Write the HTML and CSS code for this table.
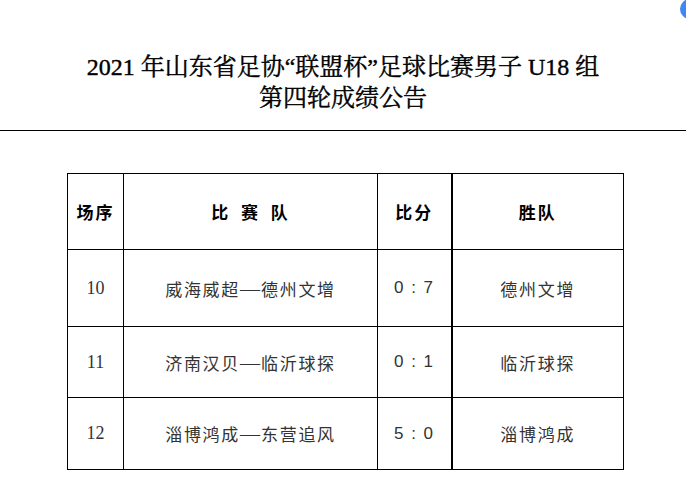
FILE: index.html
```html
<!DOCTYPE html>
<html lang="zh-CN">
<head>
<meta charset="utf-8">
<title>第四轮成绩公告</title>
<link rel="stylesheet" href="styles.css">
</head>
<body>
<span class="dot"></span>
<header class="head">
  <h1 class="title">2021 年山东省足协“联盟杯”足球比赛男子 U18 组<br>第四轮成绩公告</h1>
</header>
<main class="content">
  <table class="results">
    <colgroup>
      <col class="c-no"><col class="c-team"><col class="c-score"><col class="c-win">
    </colgroup>
    <thead>
      <tr>
        <th>场序</th>
        <th class="spread">比 赛 队</th>
        <th>比分</th>
        <th>胜队</th>
      </tr>
    </thead>
    <tbody>
      <tr>
        <td class="num">10</td>
        <td class="team">威海威超<span class="dash">—</span>德州文增</td>
        <td class="score">0 : 7</td>
        <td class="team">德州文增</td>
      </tr>
      <tr>
        <td class="num">11</td>
        <td class="team">济南汉贝<span class="dash">—</span>临沂球探</td>
        <td class="score">0 : 1</td>
        <td class="team">临沂球探</td>
      </tr>
      <tr>
        <td class="num">12</td>
        <td class="team">淄博鸿成<span class="dash">—</span>东营追风</td>
        <td class="score">5 : 0</td>
        <td class="team">淄博鸿成</td>
      </tr>
    </tbody>
  </table>
</main>
</body>
</html>
```
FILE: styles.css
```css
html, body {
  margin: 0;
  padding: 0;
  background: #fff;
  overflow: hidden;
}
body {
  width: 686px;
  height: 482px;
  position: relative;
  font-family: "Noto Sans CJK SC", sans-serif;
}
.dot {
  position: absolute;
  left: 680px;
  top: -1px;
  width: 20px;
  height: 20px;
  border-radius: 50%;
  background: #4286f5;
}
.head {
  padding: 52px 0 16px;
  border-bottom: 1px solid #000;
}
.title {
  margin: 0;
  text-align: center;
  font-family: "Liberation Serif", "Noto Serif CJK SC", "Noto Sans CJK SC", serif;
  font-size: 24px;
  line-height: 31px;
  font-weight: normal;
  -webkit-text-stroke: 0.4px #000;
  color: #000;
}
.content {
  padding: 42px 0 0 67px;
}
.results {
  border-collapse: collapse;
  table-layout: fixed;
  width: 556px;
}
.c-no { width: 56px; }
.c-team { width: 254px; }
.c-score { width: 74px; }
.c-win { width: 172px; }
.results th, .results td {
  border: 1px solid #000;
  padding: 0;
  text-align: center;
  vertical-align: middle;
}
.results th:nth-child(3), .results td:nth-child(3) {
  border-right: 2px solid #000;
}
.results thead tr { height: 76px; }
.results tbody tr:nth-child(1) { height: 77px; }
.results tbody tr:nth-child(2) { height: 71px; }
.results tbody tr:nth-child(3) { height: 72px; }
.results th {
  font-family: "Noto Sans CJK SC", sans-serif;
  font-size: 17px;
  font-weight: bold;
  letter-spacing: 2px;
  color: #000;
}
.results th.spread {
  word-spacing: 5px;
}
.num {
  font-family: "Liberation Serif", serif;
  font-size: 18px;
  color: #333;
}
.team {
  font-family: "Noto Sans CJK SC", sans-serif;
  font-size: 17px;
  letter-spacing: 1.7px;
  color: #333;
}
.dash {
  font-family: "Liberation Serif", serif;
  font-size: 20px;
  letter-spacing: 0;
  margin-right: 1px;
}
.score {
  font-family: "Liberation Sans", sans-serif;
  font-size: 17px;
  letter-spacing: 1.5px;
  color: #333;
}
```
